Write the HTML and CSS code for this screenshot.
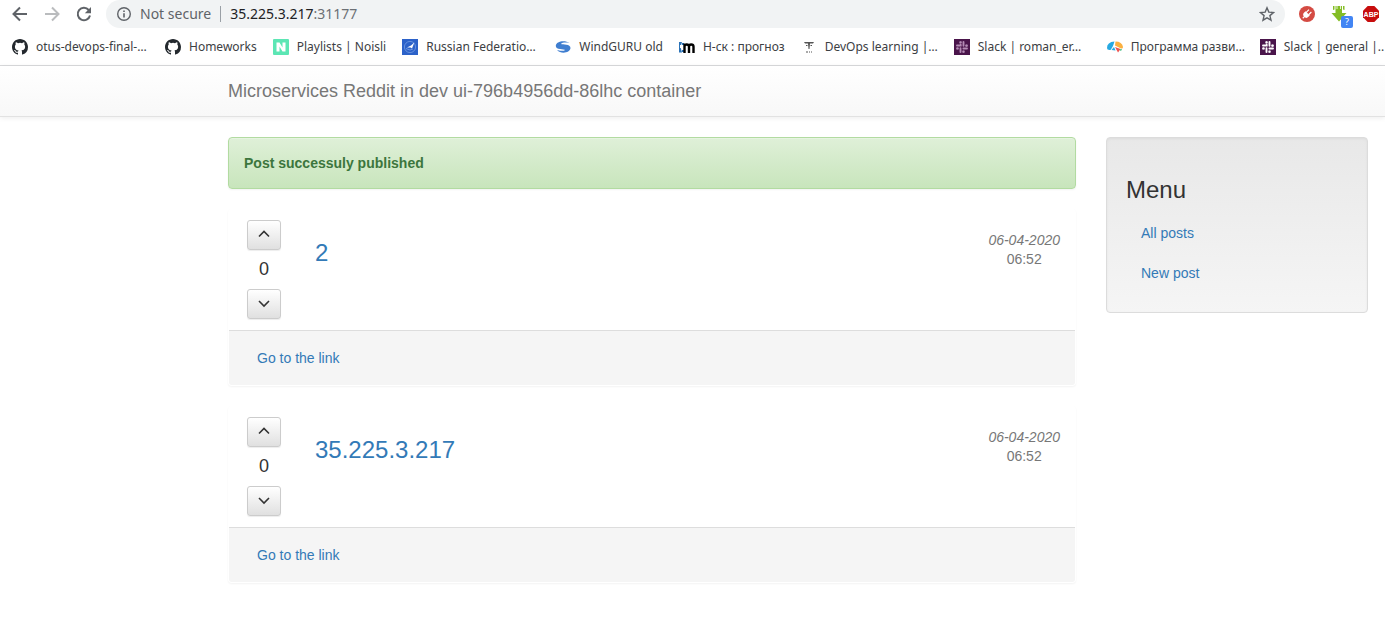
FILE: index.html
```html
<!DOCTYPE html>
<html lang="en">
<head>
<meta charset="utf-8">
<title>Microservices Reddit</title>
<link rel="stylesheet" href="styles.css">
</head>
<body>
<svg class="defs" aria-hidden="true">
  <symbol id="github" viewBox="0 0 16 16"><path fill="#24292e" fill-rule="evenodd" d="M8 0C3.58 0 0 3.58 0 8c0 3.54 2.29 6.53 5.47 7.59.4.07.55-.17.55-.38 0-.19-.01-.82-.01-1.49-2.01.37-2.53-.49-2.69-.94-.09-.23-.48-.94-.82-1.13-.28-.15-.68-.52-.01-.53.63-.01 1.08.58 1.23.82.72 1.21 1.87.87 2.33.66.07-.52.28-.87.51-1.07-1.78-.2-3.64-.89-3.64-3.95 0-.87.31-1.59.82-2.15-.08-.2-.36-1.02.08-2.12 0 0 .67-.21 2.2.82a7.6 7.6 0 0 1 4 0c1.53-1.04 2.2-.82 2.2-.82.44 1.1.16 1.92.08 2.12.51.56.82 1.27.82 2.15 0 3.07-1.87 3.75-3.65 3.95.29.25.54.73.54 1.48 0 1.07-.01 1.93-.01 2.2 0 .21.15.46.55.38A8 8 0 0 0 16 8c0-4.42-3.58-8-8-8z"/></symbol>
  <symbol id="slack" viewBox="0 0 16 16"><path fill="#4a154b" d="M0 0h16v16H0z"/><g fill="none" stroke="currentColor" stroke-width="1.9" stroke-linecap="round"><path d="M6.700 5.800V6.500H3M9.500 3v3.700M12.800 6.700h-.5M9.400 9.500H13M6.500 9.300V13M3.200 9.400h.5M6.500 3.200h.2M9.500 12.600v.3"/></g><path fill="currentColor" d="M5.500 2.500h2v2h-2zM11.500 5.500h2v2h-2zM8.500 11.500h2v2h-2zM2.500 8.500h2v2h-2z"/></symbol>
  <symbol id="up" viewBox="0 0 14 14"><path d="M2 9.500 7 4.500l5 5" fill="none" stroke="#333" stroke-width="1.600"/></symbol>
  <symbol id="down" viewBox="0 0 14 14"><path d="m2 5 5 5 5-5" fill="none" stroke="#333" stroke-width="1.600"/></symbol>
</svg>

<header class="browser">
  <div class="toolbar">
    <button class="tool" aria-label="Back"><svg width="16" height="16" viewBox="0 0 16 16"><path d="M15 8H2M8 1.5 1.5 8 8 14.5" fill="none" stroke="#5f6368" stroke-width="2"/></svg></button>
    <button class="tool" aria-label="Forward"><svg width="16" height="16" viewBox="0 0 16 16"><path d="M1 8h13M8 1.5 14.5 8 8 14.5" fill="none" stroke="#babcbe" stroke-width="2"/></svg></button>
    <button class="tool" aria-label="Reload"><svg width="16" height="16" viewBox="0 0 16 16"><path d="M14 9.5A6.2 6.2 0 1 1 12.7 4" fill="none" stroke="#5f6368" stroke-width="2"/><path d="M15 1v6.2H8.8z" fill="#5f6368"/></svg></button>
    <div class="omnibox">
      <svg width="16" height="16" viewBox="0 0 16 16"><circle cx="8" cy="8" r="6.3" fill="none" stroke="#5f6368" stroke-width="1.4"/><path d="M7.2 7.2h1.6v4.2H7.2zM7.2 4.4h1.6V6H7.2z" fill="#5f6368"/></svg>
      <span class="insecure">Not secure</span>
      <span class="address"><span class="host">35.225.3.217</span>:31177</span>
      <button class="star" aria-label="Bookmark this page"><svg width="16" height="16" viewBox="0 0 16 16"><path d="m8 1.8 1.8 4.3 4.7.4-3.6 3.1 1.1 4.6L8 11.8l-4 2.4 1.1-4.6L1.5 6.5l4.7-.4z" fill="none" stroke="#5f6368" stroke-width="1.4"/></svg></button>
    </div>
    <div class="extensions">
      <button class="tool" aria-label="Plug"><svg width="16" height="16" viewBox="0 0 16 16"><circle cx="8" cy="8" r="8" fill="#d44b43"/><g transform="rotate(45 8 8)" fill="#fff"><path d="M5 7h6v2a3 3 0 0 1-6 0zM5.7 3.500h1.200V7H5.700zM9.100 3.500h1.200V7H9.100zM7.400 11h1.200v3H7.400z"/></g></svg></button>
      <button class="tool" aria-label="Downloads"><svg width="22" height="24" viewBox="0 0 22 24"><path fill="#84bd25" d="M2 2h1.500v3.500L2 6zM4.500 2H11v7h4.500L8 17.500.5 9h4zM12 2h1.500v4L12 5.500z"/><path stroke="#fff" stroke-width=".8" d="M6 2v3M9.500 2v3"/><rect x="10" y="12" width="12" height="12" rx="2" fill="#4285f4"/><text x="16" y="21" text-anchor="middle" class="badge">?</text></svg></button>
      <button class="tool" aria-label="Adblock"><svg width="16" height="16" viewBox="0 0 16 16"><path d="M4.700 0h6.600L16 4.700v6.600L11.300 16H4.700L0 11.300V4.700z" fill="#c70d0d"/><text x="8" y="10.600" text-anchor="middle" class="abp">ABP</text></svg></button>
    </div>
  </div>
  <nav class="bookmarks" aria-label="Bookmarks">
    <a class="cut" href="#"><svg width="16" height="16"><use href="#github"/></svg><span>otus-devops-final-…</span></a>
    <a href="#"><svg width="16" height="16"><use href="#github"/></svg><span>Homeworks</span></a>
    <a href="#"><svg width="16" height="16" viewBox="0 0 16 16"><rect width="16" height="16" rx="1" fill="#5ce6b4"/><path d="M3.500 3.500h3l3 5v-5h3v9h-3l-3-5v5h-3z" fill="#fff"/></svg><span>Playlists | Noisli</span></a>
    <a class="cut" href="#"><svg width="16" height="16" viewBox="0 0 16 16"><path fill="#2c62c9" d="M0 0h16v16H0z"/><circle cx="8" cy="8" r="5.6" fill="none" stroke="#7ea3e4" stroke-width=".7"/><path d="M12.300 3.500 10 9.500 8.500 8.500 5 8.400 9 6.600z" fill="#fff"/><path d="M4 9.500 8 11l3-1" fill="none" stroke="#7ea3e4" stroke-width=".8"/></svg><span>Russian Federatio…</span></a>
    <a href="#"><svg width="16" height="16" viewBox="0 0 16 16"><path fill="#3f7ed0" d="M14.500 4C10 1 1 2 .8 7c0 4 8.200 2.800 9.500 4-1.500 1.200-6 1-8.300 0 4 4.500 13 3 13.500-2 .2-4.300-8-3.200-9.500-4C7 3.500 11 3.300 14.500 4z"/></svg><span>WindGURU old</span></a>
    <a href="#"><svg width="16" height="16" viewBox="0 0 16 16"><path d="M0 3h3L1.500 8 3 13.500H0z" fill="#2b73b8"/><path d="M1 6h3v3H1z" fill="#fff"/><path d="M3 4h2v2H3zM3 11h2v2H3z" fill="#2b73b8"/><path d="M5.500 14V4.500M5.500 7.500q0-2 2.200-2t2.300 2V14M10 7.500q0-2 2.200-2t2.300 2V14" fill="none" stroke="#000" stroke-width="2.400"/></svg><span>Н-ск : прогноз</span></a>
    <a class="cut" href="#"><svg width="16" height="16" viewBox="0 0 16 16"><path fill="#555" d="M3 3h10l-1 1.500H9L8.500 10h-1L7 4.500H4zM5 6h1.500v1H5zM9.500 6H11v1H9.500zM5 12.500h2v1H5zM8 12.500h1v1H8zM10 12.500h1v1h-1z"/></svg><span>DevOps learning |…</span></a>
    <a class="cut muted" href="#"><svg width="16" height="16"><use href="#slack"/></svg><span>Slack | roman_er…</span></a>
    <a class="cut" href="#"><svg width="16" height="16" viewBox="0 0 16 16"><path d="M0 9Q0 3 7.500 2.500L6 7q-1 2-2.500 4Q0 11.500 0 9z" fill="#27a9e1"/><path d="M8.500 2.500Q15 2.500 16 8q0 2-2 1.500L8 6.500z" fill="#fbb040"/><path d="M4.500 11 7 8l1.500 3.500z" fill="#27a9e1"/><path d="m8 8 5.500 2-2.500 3.500z" fill="#ef5350"/><path d="M12 10.500 15 10l-1 2z" fill="#35b779"/></svg><span>Программа разви…</span></a>
    <a class="bright" href="#"><svg width="16" height="16"><use href="#slack"/></svg><span>Slack | general |..</span></a>
  </nav>
</header>

<div class="navbar"><a href="#">Microservices Reddit in dev ui-796b4956dd-86lhc container</a></div>

<div class="layout">
  <main>
    <div class="alert" role="status"><strong>Post successuly published</strong></div>
    <article class="post">
      <div class="post-body">
        <div class="votes">
          <button aria-label="Vote up"><svg width="14" height="14"><use href="#up"/></svg></button>
          <span class="count">0</span>
          <button aria-label="Vote down"><svg width="14" height="14"><use href="#down"/></svg></button>
        </div>
        <h3><a href="#">2</a></h3>
        <div class="date"><em>06-04-2020</em><br>06:52</div>
      </div>
      <footer><a href="#">Go to the link</a></footer>
    </article>
    <article class="post">
      <div class="post-body">
        <div class="votes">
          <button aria-label="Vote up"><svg width="14" height="14"><use href="#up"/></svg></button>
          <span class="count">0</span>
          <button aria-label="Vote down"><svg width="14" height="14"><use href="#down"/></svg></button>
        </div>
        <h3><a href="#">35.225.3.217</a></h3>
        <div class="date"><em>06-04-2020</em><br>06:52</div>
      </div>
      <footer><a href="#">Go to the link</a></footer>
    </article>
  </main>
  <aside class="menu">
    <h3>Menu</h3>
    <nav aria-label="Menu"><a href="#">All posts</a><a href="#">New post</a></nav>
  </aside>
</div>
</body>
</html>
```
FILE: styles.css
```css
* { box-sizing: border-box; }
body {
  margin: 0;
  background: #fff;
  color: #333;
  font: 14px/20px "Liberation Sans", Arial, sans-serif;
  overflow-x: hidden;
}
a { color: #337ab7; text-decoration: none; }
button { padding: 0; border: 0; background: none; cursor: pointer; }
svg { display: block; flex: none; }
.defs { position: absolute; width: 0; height: 0; }

.browser {
  font-family: "Noto Sans", sans-serif;
  border-bottom: 1px solid #d9dadc;
}
.toolbar { display: flex; align-items: center; height: 28px; padding-left: 12px; }
.toolbar > .tool { margin-right: 16px; }
.toolbar > .tool:nth-child(3) { margin-right: 14px; }
.omnibox {
  flex: 1;
  display: flex;
  align-items: center;
  height: 28px;
  padding: 0 10px;
  border-radius: 14px;
  background: #f1f3f4;
  color: #5f6368;
  font-size: 14px;
}
.insecure {
  margin-left: 8px;
  padding-right: 9px;
  border-right: 1px solid #9aa0a6;
  line-height: 16px;
}
.address { margin-left: 9px; color: #6c7075; }
.host { color: #202124; }
.star { margin-left: auto; }
.extensions { display: flex; align-items: center; gap: 10px; width: 100px; padding-left: 14px; }
.extensions .tool:nth-child(2) { padding-top: 4px; margin-left: 6px; }
.badge { font: 9px "Noto Sans", sans-serif; fill: #fff; }
.abp { font: bold 7px "Liberation Sans", sans-serif; fill: #fff; }

.bookmarks {
  display: flex;
  gap: 16px;
  height: 37px;
  padding-left: 12px;
  font-size: 12px;
  white-space: nowrap;
  overflow: hidden;
}
.bookmarks a { display: flex; align-items: center; gap: 8px; flex: none; color: #3c4043; }
.bookmarks .cut { width: 137px; }
.muted svg { color: #b48cb5; }
.bright svg { color: #fff; }

.navbar {
  display: flex;
  align-items: center;
  height: 51px;
  padding-left: 228px;
  border-bottom: 1px solid #e2e2e2;
  background: linear-gradient(#fff, #f8f8f8);
  box-shadow: 0 1px 5px rgba(0, 0, 0, .075);
}
.navbar a { color: #777; font-size: 18px; }

.layout {
  display: grid;
  grid-template-columns: minmax(0, 1fr) 262px;
  align-items: start;
  gap: 30px;
  padding: 20px 17px 20px 228px;
}
.alert {
  padding: 15px;
  border: 1px solid #b2dba1;
  border-radius: 4px;
  background: linear-gradient(#dff0d8, #c8e5bc);
  color: #3c763d;
  box-shadow: inset 0 1px 0 rgba(255, 255, 255, .25), 0 1px 2px rgba(0, 0, 0, .05);
}
.post {
  margin-top: 20px;
  border: 1px solid transparent;
  border-radius: 4px;
  box-shadow: 0 1px 2px rgba(0, 0, 0, .05);
}
.post-body { display: flex; padding: 10px 15px 11px 18px; }
.votes { display: flex; flex-direction: column; align-items: center; width: 34px; }
.votes button {
  display: grid;
  place-items: center;
  width: 34px;
  height: 30px;
  padding-bottom: 2px;
  border: 1px solid #ccc;
  border-radius: 3px;
  background: linear-gradient(#fff, #e0e0e0);
  box-shadow: 0 1px 1px rgba(0, 0, 0, .075);
}
.count { padding: 9px 0 10px; font-size: 18px; }
h3 { margin: 0; font-size: 24px; font-weight: 400; line-height: 26px; }
.post h3 { flex: 1; padding: 20px 0 0 34px; }
.date { padding-top: 11px; color: #777; font-size: 14px; line-height: 19px; text-align: center; }
.post footer {
  padding: 17px 28px;
  border-top: 1px solid #ddd;
  border-radius: 0 0 3px 3px;
  background: #f5f5f5;
}
.menu {
  padding: 39px 19px 19px;
  border: 1px solid #dcdcdc;
  border-radius: 4px;
  background: linear-gradient(#e8e8e8, #f5f5f5);
  box-shadow: inset 0 1px 3px rgba(0, 0, 0, .05), 0 1px 0 rgba(255, 255, 255, .1);
}
.menu nav { padding-top: 10px; }
.menu nav a { display: block; padding: 10px 15px; }
```
